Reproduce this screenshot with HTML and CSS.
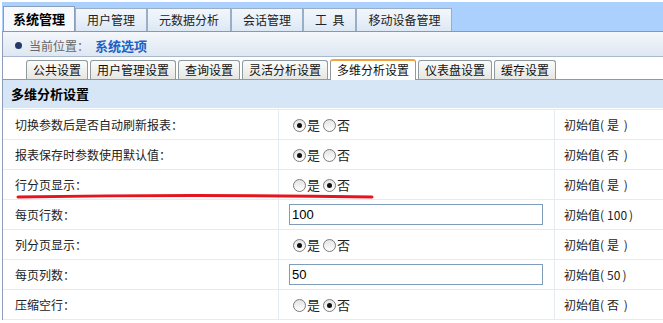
FILE: index.html
```html
<!DOCTYPE html>
<html>
	<head>
		<meta charset="utf-8">
		<title>系统选项</title>
		<link rel="stylesheet" href="styles.css">
	</head>
	<body>
		<!-- 顶部主菜单 -->
		<div class="topnav">
			<a class="tab on" href="javascript:;">系统管理</a>
			<a class="tab" href="javascript:;">用户管理</a>
			<a class="tab" href="javascript:;">元数据分析</a>
			<a class="tab" href="javascript:;">会话管理</a>
			<a class="tab" href="javascript:;">工  具</a>
			<a class="tab" href="javascript:;">移动设备管理</a>
		</div>

		<div class="main">
			<!-- 当前位置 -->
			<div class="crumb">
				<i class="dot"></i>
				<span class="crumb-label">当前位置：</span>
				<b class="crumb-cur">系统选项</b>
			</div>

			<!-- 子选项卡 -->
			<div class="subtabs">
				<a class="stab" href="javascript:;">公共设置</a>
				<a class="stab" href="javascript:;">用户管理设置</a>
				<a class="stab" href="javascript:;">查询设置</a>
				<a class="stab" href="javascript:;">灵活分析设置</a>
				<a class="stab on" href="javascript:;">多维分析设置</a>
				<a class="stab" href="javascript:;">仪表盘设置</a>
				<a class="stab" href="javascript:;">缓存设置</a>
			</div>

			<div class="section-title">多维分析设置</div>

			<table class="opts">
				<tr>
					<td class="c-label">切换参数后是否自动刷新报表：</td>
					<td class="c-radio"><span class="radio checked"></span>是<span class="radio"></span>否</td>
					<td class="c-init">初始值(<i class="v">是 </i>)</td>
				</tr>
				<tr>
					<td class="c-label">报表保存时参数使用默认值：</td>
					<td class="c-radio"><span class="radio checked"></span>是<span class="radio"></span>否</td>
					<td class="c-init">初始值(<i class="v">否 </i>)</td>
				</tr>
				<tr>
					<td class="c-label">行分页显示：</td>
					<td class="c-radio"><span class="radio"></span>是<span class="radio checked"></span>否</td>
					<td class="c-init">初始值(<i class="v">是 </i>)</td>
				</tr>
				<tr>
					<td class="c-label">每页行数：</td>
					<td class="c-input"><input class="txt" type="text" value="100"></td>
					<td class="c-init">初始值(<i class="v">100</i>)</td>
				</tr>
				<tr>
					<td class="c-label">列分页显示：</td>
					<td class="c-radio"><span class="radio checked"></span>是<span class="radio"></span>否</td>
					<td class="c-init">初始值(<i class="v">是 </i>)</td>
				</tr>
				<tr>
					<td class="c-label">每页列数：</td>
					<td class="c-input"><input class="txt" type="text" value="50"></td>
					<td class="c-init">初始值(<i class="v">50</i>)</td>
				</tr>
				<tr>
					<td class="c-label">压缩空行：</td>
					<td class="c-radio"><span class="radio"></span>是<span class="radio checked"></span>否</td>
					<td class="c-init">初始值(<i class="v">否 </i>)</td>
				</tr>
			</table>
		</div>

		<!-- 红色标注线 -->
		<svg class="mark" width="360" height="10" viewBox="0 0 360 10">
			<path d="M2 6 Q180 3 356 6" fill="none" stroke="#e5141f" stroke-width="3" stroke-linecap="round"/>
		</svg>
	</body>
</html>
```

FILE: styles.css
```css
*{
	margin: 0;
	padding: 0;
}

body{
	margin: 2px 0 0 2px;
	font-family: "Noto Sans CJK SC", sans-serif;
	font-size: 12px;
	color: #222;
	background-color: #fff;
	position: relative;
}

a{
	text-decoration: none;
	color: #222;
}

/* 顶部主菜单 */
.topnav{
	display: flex;
	align-items: flex-end;
	height: 29px;
	padding-left: 1px;
	background-color: #acd0fe;
	border-bottom: 1px solid #8399b8;
}

.tab{
	height: 22px;
	line-height: 22px;
	padding: 0 11px;
	border: 1px solid #9aaec8;
	border-bottom: none;
	background: linear-gradient(#f3f7fc, #dde8f5);
	font-size: 12px;
	white-space: pre;
}

.tab.on{
	height: 24px;
	line-height: 24px;
	padding: 0 9px;
	background: #f6f9fd;
	border-color: #8c9fb9;
	font-size: 13px;
	font-weight: bold;
	color: #000;
}

.main{
	border-left: 1px solid #8d9fb8;
}

/* 当前位置 */
.crumb{
	display: flex;
	align-items: center;
	height: 25px;
	padding-top: 2px;
	box-sizing: border-box;
	padding-left: 12px;
	background: linear-gradient(#f4f7fb, #dee7f2);
	border-bottom: 1px solid #a9b8cc;
}

.dot{
	width: 7px;
	height: 7px;
	border-radius: 50%;
	background-color: #27396a;
	margin-right: 7px;
}

.crumb-label{
	color: #666;
	font-size: 12px;
	width: 66px;
}

.crumb-cur{
	color: #1c62c4;
	font-size: 13px;
}

/* 子选项卡 */
.subtabs{
	display: flex;
	align-items: flex-end;
	gap: 2px;
	height: 22px;
	padding-left: 23px;
	border-bottom: 1px solid #8f9a9c;
}

.stab{
	height: 18px;
	line-height: 18px;
	padding: 0 6px;
	border: 1px solid #8f9a9c;
	border-bottom: none;
	border-radius: 3px 3px 0 0;
	background: linear-gradient(#fbfbfb, #e6e6e2);
	font-size: 12px;
	color: #111;
}

.stab.on{
	background: #fff;
	border-top: 2px solid #f2a53c;
	height: 19px;
	margin-bottom: -1px;
	line-height: 18px;
}

.section-title{
	height: 28px;
	line-height: 28px;
	padding-left: 8px;
	background-color: #d6e6f7;
	font-size: 13px;
	font-weight: bold;
	color: #000;
}

/* 选项表格 */
.opts{
	width: 100%;
	table-layout: fixed;
	border-collapse: separate;
	border-spacing: 0;
	margin-top: 1px;
	border-top: 1px solid #e6ebf2;
}

.opts td{
	box-sizing: border-box;
	height: 30px;
	border-bottom: 1px solid #e6ebf2;
	border-right: 1px solid #e6ebf2;
	vertical-align: middle;
	white-space: nowrap;
}

.opts td.c-label{
	width: 276px;
	padding-left: 12px;
}

.opts td.c-radio,
.opts td.c-input{
	width: 276px;
}

.opts td.c-radio{
	padding-left: 14px;
	font-size: 13px;
}

.opts td.c-input{
	padding-left: 10px;
}

.opts td.c-init{
	padding-left: 9px;
	border-right: none;
}

/* 初始值括号内的值 */
.v{
	font-style: normal;
	padding: 0 2px 0 3px;
	white-space: pre;
}

.radio{
	display: inline-block;
	width: 11px;
	height: 11px;
	border: 1px solid #7b7b7b;
	border-radius: 50%;
	background: linear-gradient(#e4e4e4, #fff);
	vertical-align: -2px;
	margin-right: 1px;
	position: relative;
}

.c-radio .radio:nth-of-type(2){
	margin-left: 3px;
}

.radio.checked::after{
	content: "";
	position: absolute;
	left: 3px;
	top: 3px;
	width: 5px;
	height: 5px;
	border-radius: 50%;
	background-color: #111;
}

.txt{
	width: 254px;
	height: 21px;
	box-sizing: border-box;
	border: 1px solid #7f9db9;
	padding: 0 2px;
	font-family: "Liberation Sans", Arial, sans-serif;
	font-size: 13px;
	color: #000;
	outline: none;
}

/* 标注线 */
.mark{
	position: absolute;
	left: 14px;
	top: 189px;
}
```
